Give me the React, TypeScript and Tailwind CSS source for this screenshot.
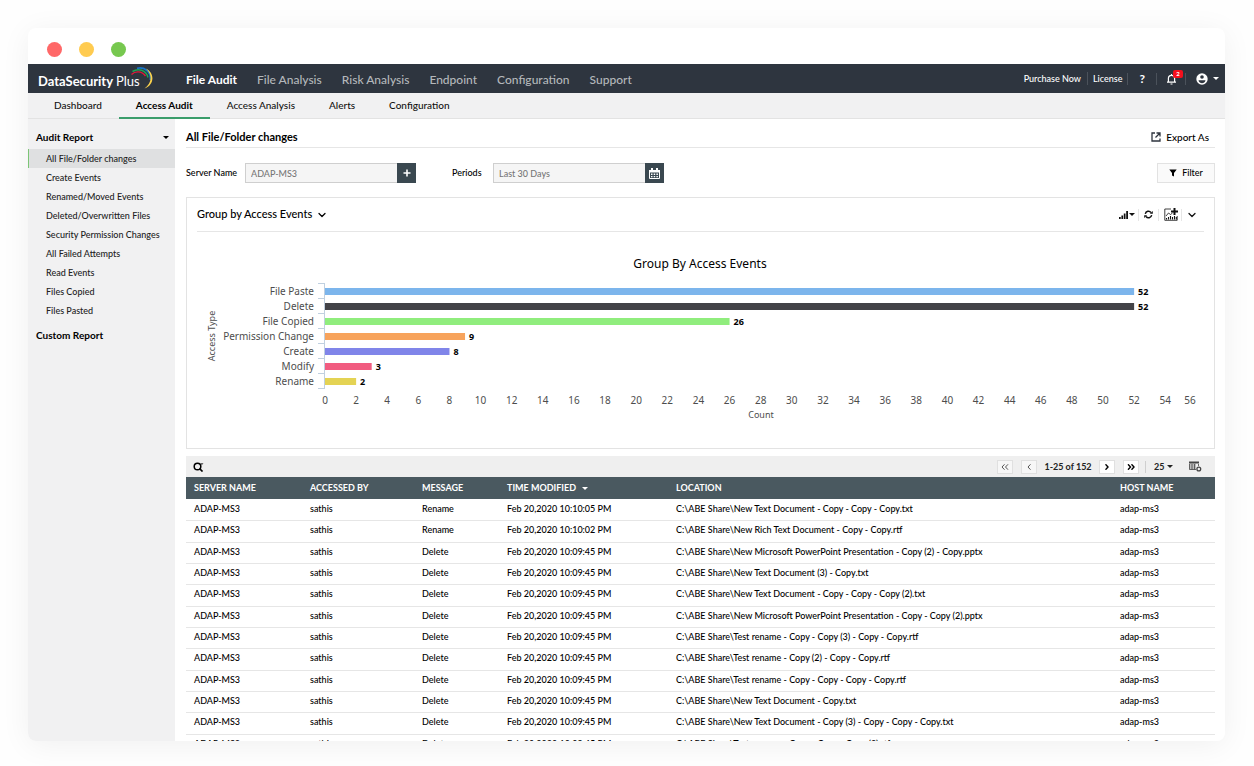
import { useState } from "react";
import { ChevronDown } from "lucide-react";

const mainNav = ["File Audit", "File Analysis", "Risk Analysis", "Endpoint", "Configuration", "Support"];

const subNav = ["Dashboard", "Access Audit", "Access Analysis", "Alerts", "Configuration"];

const reports = [
  "All File/Folder changes",
  "Create Events",
  "Renamed/Moved Events",
  "Deleted/Overwritten Files",
  "Security Permission Changes",
  "All Failed Attempts",
  "Read Events",
  "Files Copied",
  "Files Pasted",
];

const chartData = [
  { label: "File Paste", value: 52, color: "#7cb5ec" },
  { label: "Delete", value: 52, color: "#434348" },
  { label: "File Copied", value: 26, color: "#90ed7d" },
  { label: "Permission Change", value: 9, color: "#f7a35c" },
  { label: "Create", value: 8, color: "#8085e9" },
  { label: "Modify", value: 3, color: "#f15c80" },
  { label: "Rename", value: 2, color: "#e4d354" },
];

const columns = ["SERVER NAME", "ACCESSED BY", "MESSAGE", "TIME MODIFIED", "LOCATION", "HOST NAME"];

const rows = [
  { message: "Rename", time: "10:10:05", location: "New Text Document - Copy - Copy - Copy.txt" },
  { message: "Rename", time: "10:10:02", location: "New Rich Text Document - Copy - Copy.rtf" },
  { message: "Delete", time: "10:09:45", location: "New Microsoft PowerPoint Presentation - Copy (2) - Copy.pptx" },
  { message: "Delete", time: "10:09:45", location: "New Text Document (3) - Copy.txt" },
  { message: "Delete", time: "10:09:45", location: "New Text Document - Copy - Copy - Copy (2).txt" },
  { message: "Delete", time: "10:09:45", location: "New Microsoft PowerPoint Presentation - Copy - Copy (2).pptx" },
  { message: "Delete", time: "10:09:45", location: "Test rename - Copy - Copy (3) - Copy - Copy.rtf" },
  { message: "Delete", time: "10:09:45", location: "Test rename - Copy (2) - Copy - Copy.rtf" },
  { message: "Delete", time: "10:09:45", location: "Test rename - Copy - Copy - Copy - Copy.rtf" },
  { message: "Delete", time: "10:09:45", location: "New Text Document - Copy.txt" },
  { message: "Delete", time: "10:09:45", location: "New Text Document - Copy (3) - Copy - Copy - Copy.txt" },
  { message: "Delete", time: "10:09:45", location: "Test rename - Copy - Copy - Copy (2).rtf" },
];

const Caret = ({ className = "" }: { className?: string }) => (
  <svg viewBox="0 0 6 3" className={`h-[3px] w-[6px] ${className}`} fill="currentColor" aria-hidden="true">
    <path d="M0 0h6L3 3z" />
  </svg>
);

const Logo = () => (
  <div className="flex w-[158px] items-start pl-[10px] text-white">
    <span className="pt-2 text-[13px] leading-[18px] font-bold whitespace-nowrap">
      DataSecurity <span className="font-normal">Plus</span>
    </span>
    <svg viewBox="0 0 26 24" className="-ml-[11px] mt-[2px] h-6 w-[26px] shrink-0" fill="none" aria-hidden="true">
      <path d="M2.500 8.500C6 5 12.500 4.500 16.500 10" stroke="#e2173a" strokeWidth="1.400" />
      <path d="M3.500 5.500C9 2 17 3.500 19 11.500" stroke="#1fa055" strokeWidth="1.500" />
      <path d="M8 2.300C15 .8 22 5 21.500 14" stroke="#1873c4" strokeWidth="1.700" />
      <path d="M17 2.500C26.500 7.500 25 19.500 15.500 22.500C22 17.500 24.500 10 17 2.500Z" fill="#fbd24b" />
    </svg>
  </div>
);

const TopBar = () => {
  const [active, setActive] = useState("File Audit");

  return (
    <header className="flex h-[29px] shrink-0 items-stretch bg-[#2e353f]">
      <Logo />
      <nav className="flex flex-1 items-center gap-5 pt-[3px] text-xs">
        {mainNav.map((item) => (
          <a
            key={item}
            href="#"
            onClick={() => setActive(item)}
            className={item === active ? "font-bold text-white" : "font-medium text-[#b4b8bb]"}
          >
            {item}
          </a>
        ))}
      </nav>
      <div className="flex items-center pr-[6px] text-[9px] font-medium text-white">
        <a href="#" className="pr-[6px]">Purchase Now</a>
        <a href="#" className="border-l border-[#4b525b] px-[5px]">License</a>
        <button type="button" aria-label="Help" className="h-3 border-l border-[#4b525b] px-[11px] text-xs leading-3 font-bold">
          ?
        </button>
        <button type="button" aria-label="Notifications" className="relative h-3 border-x border-[#4b525b] pl-[9px] pr-2">
          <svg viewBox="0 0 11 12" className="h-3 w-[11px]" fill="none" stroke="currentColor" strokeWidth="1.200" aria-hidden="true">
            <path d="M1 9.200h9M2.400 9V5.500a3.100 3.100 0 0 1 6.200 0V9M5.500 1v1.400M4.500 11h2" />
          </svg>
          <span className="absolute -top-[3px] left-4 h-2 w-[10px] rounded-xs bg-[#f5101d] text-center text-[6px] leading-2 font-bold">
            2
          </span>
        </button>
        <button type="button" aria-label="Account" className="flex items-center gap-[5px] pl-[10px]">
          <svg viewBox="0 0 12 12" className="size-3" aria-hidden="true">
            <circle cx="6" cy="6" r="5.700" fill="#fff" />
            <circle cx="6" cy="4" r="1.800" fill="#2e353f" />
            <path d="M2.500 7.300h7C9 9.500 7.500 10.300 6 10.300S3 9.500 2.500 7.300z" fill="#2e353f" />
          </svg>
          <Caret />
        </button>
      </div>
    </header>
  );
};

const Sidebar = () => {
  const [selected, setSelected] = useState(reports[0]);

  return (
    <aside className="w-[147px] shrink-0 bg-[#f1f1f2] pt-[9px]">
      <button type="button" className="flex h-[19px] w-full items-center justify-between pl-2 pr-[6px] text-[10px] font-bold text-black">
        Audit Report
        <Caret />
      </button>
      <ul className="mt-[2px]">
        {reports.map((report) => (
          <li key={report}>
            <a
              href="#"
              onClick={() => setSelected(report)}
              className={`flex h-[19px] items-center border-l pl-[17px] text-[9px] font-medium whitespace-nowrap text-[#222] ${
                report === selected ? "border-[#7cc576] bg-[#dfe0e1]" : "border-transparent"
              }`}
            >
              {report}
            </a>
          </li>
        ))}
      </ul>
      <a href="#" className="mt-[6px] flex h-[19px] items-center pl-2 text-[10px] font-bold text-black">
        Custom Report
      </a>
    </aside>
  );
};

const Filters = () => (
  <div className="mt-[15px] flex h-5 items-center text-[9px] font-medium text-black">
    <label htmlFor="server" className="w-[59px]">Server Name</label>
    <input
      id="server"
      readOnly
      defaultValue="ADAP-MS3"
      className="h-5 w-[152px] border border-r-0 border-[#cfcfcf] bg-[#f5f5f5] px-[5px] text-[9px] text-[#777]"
    />
    <button type="button" aria-label="Add server" className="flex h-5 w-[19px] items-center justify-center bg-[#3a4850] text-white">
      <svg viewBox="0 0 8 8" className="size-2" stroke="currentColor" strokeWidth="1.600" aria-hidden="true">
        <path d="M4 .5v7M.5 4h7" />
      </svg>
    </button>
    <label htmlFor="period" className="ml-9 w-[41px]">Periods</label>
    <input
      id="period"
      readOnly
      defaultValue="Last 30 Days"
      className="h-5 w-[152px] border border-r-0 border-[#cfcfcf] bg-[#f5f5f5] px-[5px] text-[9px] text-[#777]"
    />
    <button type="button" aria-label="Choose period" className="flex h-5 w-[19px] items-center justify-center bg-[#3a4850] text-white">
      <svg viewBox="0 0 11 11" className="size-[11px]" aria-hidden="true">
        <path d="M.5 4h10v6.500H.5z" fill="none" stroke="currentColor" />
        <path d="M0 2h11v2H0zM2 0h2v2H2zM7 0h2v2H7z" fill="currentColor" />
        <path d="M2 5.500h1.500V7H2zM4.700 5.500h1.500V7H4.700zM7.400 5.500h1.500V7H7.400zM2 8h1.500v1.300H2zM4.700 8h1.500v1.300H4.700zM7.400 8h1.500v1.300H7.400z" fill="currentColor" />
      </svg>
    </button>
    <button type="button" className="ml-auto flex h-5 w-[58px] items-center justify-center gap-[5px] border border-[#e2e2e2] bg-[#fafafa]">
      <svg viewBox="0 0 8 8" className="size-2" fill="currentColor" aria-hidden="true">
        <path d="M.3.500h7.400L5 4v3.500L3 6.500V4z" />
      </svg>
      Filter
    </button>
  </div>
);

const AXIS_X = 128;
const UNIT = 15.56;
const ticks = Array.from({ length: 29 }, (_, i) => i * 2);

const EventsChart = () => (
  <svg viewBox="0 0 1007 216" className="block w-full font-['Noto_Sans','Open_Sans',sans-serif]" role="img" aria-label="Group By Access Events">
    <text x="503" y="36" textAnchor="middle" fontSize="12" fill="#000">
      Group By Access Events
    </text>
    <text x="18" y="104" textAnchor="middle" fontSize="9" fill="#4d4d4d" transform="rotate(-90 18 104)">
      Access Type
    </text>
    <path d="M127.500 52v105" stroke="#c0d0e0" />
    {chartData.map(({ label, value, color }, i) => (
      <g key={label}>
        <path d={`M121 ${51.5 + i * 15}h7`} stroke="#c0d0e0" />
        <text x="117" y={63 + i * 15} textAnchor="end" fontSize="10" fill="#4d4d4d">
          {label}
        </text>
        <rect x={AXIS_X} y={56 + i * 15} width={value * UNIT} height="7" fill={color} />
        <text x={AXIS_X + value * UNIT + 4} y={63 + i * 15} fontSize="9" fontWeight="700" fill="#000">
          {value}
        </text>
      </g>
    ))}
    <path d="M121 156.500h7" stroke="#c0d0e0" />
    {ticks.map((tick) => (
      <text key={tick} x={Math.min(AXIS_X + tick * UNIT, 993)} y="172" textAnchor="middle" fontSize="10" fill="#4d4d4d">
        {tick}
      </text>
    ))}
    <text x="564" y="186" textAnchor="middle" fontSize="9" fill="#4d4d4d">
      Count
    </text>
  </svg>
);

const ChartPanel = () => (
  <section className="mt-[14px] border border-[#e3e3e3] px-[10px]">
    <div className="flex h-[34px] items-center border-b border-[#e6e6e6] pr-[6px]">
      <button type="button" className="flex items-center gap-1 text-[11px] font-medium text-black">
        Group by Access Events
        <ChevronDown className="size-3" strokeWidth={2.5} />
      </button>
      <div className="ml-auto flex items-center text-[#111]">
        <button type="button" aria-label="Chart type" className="flex h-3 items-center gap-px border-r border-[#e6e6e6] pr-[3px]">
          <svg viewBox="0 0 9 8" className="h-2 w-[9px]" fill="currentColor" aria-hidden="true">
            <path d="M0 6h1.700v2H0zM2.400 4.500h1.700V8H2.400zM4.800 2.500h1.700V8H4.800zM7.200 0h1.800v8H7.200z" />
          </svg>
          <Caret className="w-[4px]" />
        </button>
        <button type="button" aria-label="Refresh" className="flex h-3 items-center border-r border-[#e6e6e6] px-[5px]">
          <svg viewBox="0 0 9 9" className="size-[9px]" fill="none" stroke="currentColor" strokeWidth="1.400" aria-hidden="true">
            <path d="M1.300 3.800A3.200 3.200 0 0 1 7 2.500M7.700 5.200A3.200 3.200 0 0 1 2 6.500" />
            <path d="M5.800 3.800h3V1zM3.200 5.200h-3V8z" fill="currentColor" stroke="none" />
          </svg>
        </button>
        <button type="button" aria-label="Add to dashboard" className="flex h-3 items-center border-r border-[#e6e6e6] pr-[3px] pl-[5px]">
          <svg viewBox="0 0 14 13" className="h-[13px] w-[14px]" fill="none" stroke="currentColor" aria-hidden="true">
            <path d="M7 1H.8v11.300h12.400V8" strokeWidth=".8" />
            <path d="M2 8l2.500-3 2 1.500L8.500 5" strokeWidth=".8" />
            <path d="M2.500 11.500v-1.500M4.500 11.500V9M6.500 11.500V8M8.500 11.500V9M10.500 11.500V8M12.300 11.500V9" strokeWidth="1.100" />
            <path d="M10.500 0v7M7 3.500h7" strokeWidth="2" />
          </svg>
        </button>
        <button type="button" aria-label="Collapse" className="pl-1">
          <ChevronDown className="size-3" strokeWidth={2.5} />
        </button>
      </div>
    </div>
    <EventsChart />
  </section>
);

const pageButton = "flex h-[14px] w-4 items-center justify-center border border-[#e0e0e0]";

const Pager = () => (
  <div className="mt-[7px] flex h-[21px] items-center bg-[#efefef] pl-[7px] pr-[13px] text-[9px] font-bold text-[#222]">
    <button type="button" aria-label="Search" className="text-black">
      <svg viewBox="0 0 11 10" className="h-[10px] w-[11px]" fill="none" stroke="currentColor" aria-hidden="true">
        <circle cx="4.500" cy="4.500" r="3.300" strokeWidth="1.500" />
        <path d="M6.500 6.500l3 3" strokeWidth="1.700" />
        <path d="M7 1h3.500L8.800 3.500z" fill="#666" stroke="none" />
      </svg>
    </button>
    <button type="button" aria-label="First page" className={`${pageButton} ml-auto bg-[#f7f7f7] text-[#555]`}>
      <svg viewBox="0 0 8 6" className="h-[6px] w-2" fill="none" stroke="currentColor" aria-hidden="true">
        <path d="M3.500.3L1 3l2.500 2.700M7 .3L4.500 3 7 5.700" />
      </svg>
    </button>
    <button type="button" aria-label="Previous page" className={`${pageButton} ml-2 bg-[#f7f7f7] text-[#555]`}>
      <svg viewBox="0 0 4 6" className="h-[6px] w-1" fill="none" stroke="currentColor" aria-hidden="true">
        <path d="M3.500.3L1 3l2.500 2.700" />
      </svg>
    </button>
    <span className="w-[62px] text-center">1-25 of 152</span>
    <button type="button" aria-label="Next page" className={`${pageButton} bg-white text-black`}>
      <svg viewBox="0 0 4 6" className="h-[6px] w-1" fill="none" stroke="currentColor" strokeWidth="1.400" aria-hidden="true">
        <path d="M.5.3L3 3 .5 5.700" />
      </svg>
    </button>
    <button type="button" aria-label="Last page" className={`${pageButton} ml-2 bg-white text-black`}>
      <svg viewBox="0 0 8 6" className="h-[6px] w-2" fill="none" stroke="currentColor" strokeWidth="1.400" aria-hidden="true">
        <path d="M1 .3L3.500 3 1 5.700M4.500.3L7 3 4.500 5.700" />
      </svg>
    </button>
    <label className="ml-[6px] flex h-3 items-center border-l border-[#cfcfcf] pl-2">
      <select aria-label="Rows per page" className="w-3 appearance-none">
        <option>25</option>
        <option>50</option>
      </select>
      <Caret className="ml-px" />
    </label>
    <button type="button" aria-label="Choose columns" className="ml-4">
      <svg viewBox="0 0 13 11" className="h-[11px] w-[13px]" fill="none" stroke="#444" aria-hidden="true">
        <path d="M.5 2.500h6.500v6H.5z" fill="#bbb" stroke="none" />
        <path d="M.5 3v5.500h6.500M3 3v5.500M5.500 3v5.500M9.500 3v2" strokeWidth=".8" />
        <path d="M0 1.500h10" strokeWidth="2" />
        <circle cx="9.800" cy="8" r="1.900" strokeWidth="1.300" />
      </svg>
    </button>
  </div>
);

const EventsTable = () => (
  <table className="w-full table-fixed border-collapse text-left whitespace-nowrap text-black">
    <colgroup>
      <col className="w-[116px]" />
      <col className="w-[112px]" />
      <col className="w-[85px]" />
      <col className="w-[169px]" />
      <col />
      <col className="w-[103px]" />
    </colgroup>
    <thead className="bg-[#4a5960] text-[9px] text-white">
      <tr className="h-[22px]">
        {columns.map((column) => (
          <th key={column} scope="col" className="py-0 pl-2 font-bold">
            {column}
            {column === "TIME MODIFIED" && <Caret className="ml-[6px] inline-block align-middle" />}
          </th>
        ))}
      </tr>
    </thead>
    <tbody className="text-[9px] font-medium">
      {rows.map(({ message, time, location }, i) => (
        <tr key={i} className="h-[21px] border-b border-[#e6e6e6] nth-[3n+2]:h-[22px] *:pb-[2px] *:pl-2">
          <td>ADAP-MS3</td>
          <td>sathis</td>
          <td>{message}</td>
          <td>Feb 20,2020 {time} PM</td>
          <td>C:\ABE Share\{location}</td>
          <td>adap-ms3</td>
        </tr>
      ))}
    </tbody>
  </table>
);

const App = () => {
  const [tab, setTab] = useState("Access Audit");

  return (
    <div className="h-screen overflow-hidden bg-[#fefefe] pt-7 pr-[29px] pb-[25px] pl-7 font-['Lato','Open_Sans',sans-serif]">
      <div className="flex h-full flex-col overflow-hidden rounded-lg bg-white shadow-[0_4px_30px_rgba(0,0,0,0.06)]">
        <div className="flex h-9 shrink-0 items-end gap-[17px] pb-[7px] pl-[19px]">
          <span className="size-[15px] rounded-full bg-[#ff6868]" />
          <span className="size-[15px] rounded-full bg-[#ffcb50]" />
          <span className="size-[15px] rounded-full bg-[#77c84f]" />
        </div>
        <TopBar />
        <nav className="flex h-[26px] shrink-0 border-b border-[#e3e3e3] bg-[#f1f1f2] pl-[9px] text-[10px] text-[#111]">
          {subNav.map((item) => (
            <a
              key={item}
              href="#"
              onClick={() => setTab(item)}
              className={`flex h-[26px] items-center border-b-2 px-[17px] ${
                item === tab ? "border-[#3a9d6b] font-bold text-black" : "border-transparent font-medium"
              }`}
            >
              {item}
            </a>
          ))}
        </nav>
        <div className="flex min-h-0 flex-1">
          <Sidebar />
          <main className="min-w-0 flex-1 overflow-hidden pr-[10px] pl-[11px]">
            <div className="flex h-[29px] items-center justify-between border-b border-[#e6e6e6] pt-2 text-[11px] font-bold text-black">
              <h1>All File/Folder changes</h1>
              <button type="button" className="flex items-center gap-[5px] pr-[6px] text-[10px] font-medium">
                <svg viewBox="0 0 10 10" className="size-[10px]" fill="none" stroke="#2e353f" strokeWidth="1.300" aria-hidden="true">
                  <path d="M4 1H1v8h8V6.500M5.500 1H9v3.500M9 1L4.500 5.500" />
                </svg>
                Export As
              </button>
            </div>
            <Filters />
            <ChartPanel />
            <Pager />
            <EventsTable />
          </main>
        </div>
      </div>
    </div>
  );
};

export default App;
